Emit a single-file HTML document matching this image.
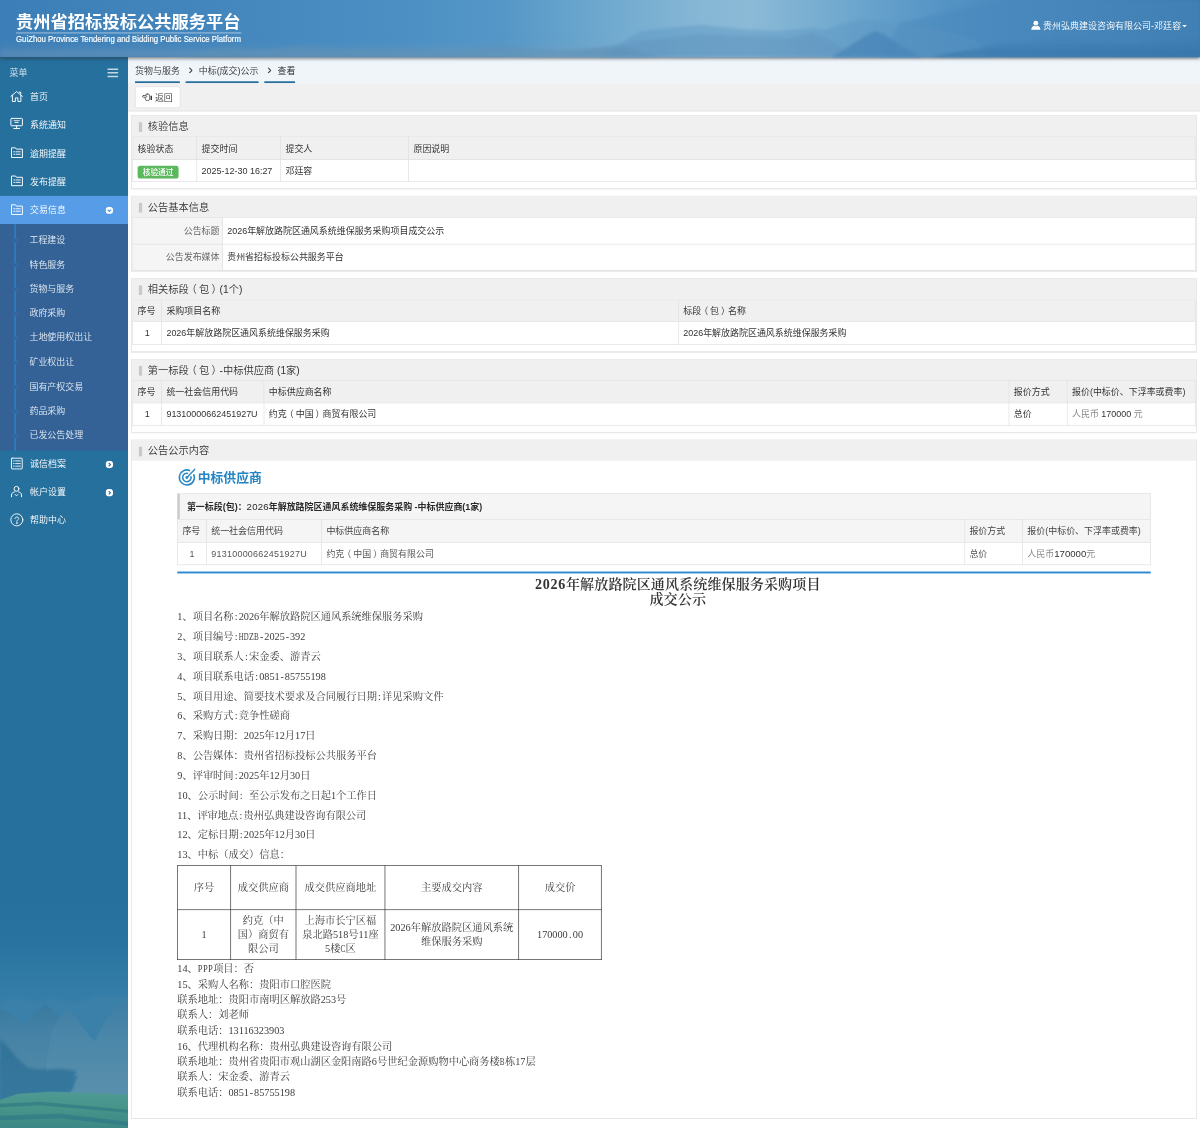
<!DOCTYPE html>
<html lang="zh-CN">
<head>
<meta charset="utf-8">
<title>贵州省招标投标公共服务平台</title>
<style>
*{box-sizing:border-box;margin:0;padding:0}
html,body{width:1200px;height:1128px;overflow:hidden;background:#fff}
body{font-family:"Liberation Sans","Noto Sans CJK SC",sans-serif;font-size:14px;color:#333;font-weight:350}
#stage{position:absolute;left:0;top:0;width:1875px;height:1763px;transform:scale(.64);transform-origin:0 0;overflow:hidden;background:#fff}
/* header */
.header{position:absolute;left:0;top:0;width:1875px;height:89px;z-index:5;overflow:visible;background:#4688bf;
 box-shadow:0 2px 6px rgba(0,0,0,.6)}
.logo{position:absolute;left:25px;top:17px;color:#fff}
.logo .cn{font-size:27px;font-weight:bold;line-height:34px;white-space:nowrap}
.logo .line{height:1px;background:rgba(255,255,255,.8);margin-top:0;width:352px}
.logo .en{font-size:12.2px;line-height:14px;margin-top:3.4px;white-space:nowrap;transform:scaleY(1.12);transform-origin:0 100%;-webkit-text-stroke:.25px #fff}
.user{position:absolute;left:1629.6px;top:30px;color:#fff;font-size:14px;line-height:20px;white-space:nowrap;letter-spacing:.08px}
/* sidebar */
.sidebar{position:absolute;left:0;top:89px;width:200px;height:1674px;background:#26709d;color:#fff;overflow:hidden}
.menuhd{height:40.3px;line-height:48px;padding-left:15px;font-size:14px;position:relative;color:#dbe7f0}
.item{height:44.2px;line-height:44.2px;padding-left:47px;font-size:14px;position:relative;white-space:nowrap}
.item.active{background:#569ce6}
.sub{background:#346296;padding:5.4px 0 4.2px 0;position:relative}
.sub ~ .item{height:43.9px;line-height:43.9px}
.sub:before{content:"";position:absolute;left:22px;top:0;bottom:0;width:3px;background:#2f7abd}
.sub .si{height:38.2px;line-height:38.2px;padding-left:46px;font-size:14px;color:#e3ebf4;position:relative}
/* main */
.main{position:absolute;left:200px;top:89px;width:1675px;height:1674px;background:#fff}
.crumb{height:40.6px;background:#f0f5fa;position:relative;font-size:14px;line-height:20px}
.toolbar{height:44.4px;background:#f0f0f0;border-bottom:1px solid #ddd;position:relative}
.btn{position:absolute;left:11px;top:5.4px;width:71px;height:34px;border:1px solid #ddd;border-radius:4px;background:#fff;font-size:14px;line-height:34px;padding-left:30px}
.panel{margin:0 5px 11px 5px;border:1px solid #ddd;background:#fff;padding:0 1px 10px 1px;box-shadow:0 1px 1px rgba(0,0,0,.08)}
.panel.np{padding-bottom:0}
.panel .pt{height:32px;line-height:34.5px;background:#f0f0f0;font-size:16px;padding-left:25px;position:relative;color:#333;margin:0 -1px}
.panel .pt:before{content:"";position:absolute;left:11px;top:10px;width:5px;height:15px;background:#c8c8c8}
table.g{border-collapse:collapse;width:100%;font-size:14px;table-layout:fixed}
table.g th,table.g td{border:1px solid #ddd;height:35px;padding:0 7px;text-align:left;font-weight:normal;white-space:nowrap;line-height:20px}
table.g th{background:#f0f0f0}
table.g td.c{text-align:center}
table.kv td{height:41px}
table.kv td.k{background:#f5f5f5;text-align:right;color:#666;padding-right:4px}
.badge{display:inline-block;background:#5cb85c;color:#fff;font-size:12px;line-height:20px;height:20px;padding:0 8px;border-radius:4px;vertical-align:middle;font-weight:500;position:relative;top:1.2px}

/* content */
.content{margin-left:70px;width:1564px;position:relative}
.content .hd{margin-top:12px;height:27px;line-height:29.8px;font-size:20px;font-weight:bold;color:#2484c4;padding-left:32px;position:relative;white-space:nowrap}
.content .ibox{margin-top:11.7px;width:1521px;height:40.6px;border:1px solid #ddd;border-left:4px solid #ccc;border-bottom:0;background:#f5f5f5;font-size:14px;font-weight:bold;line-height:40px;padding-left:11px;color:#2a2a2a;white-space:nowrap}
table.it{border-collapse:collapse;width:1521px;font-size:14px;table-layout:fixed;color:#555}
table.it th,table.it td{border:1px solid #ddd;height:34.7px;padding:0 7px;text-align:left;font-weight:normal;white-space:nowrap;line-height:20px}
table.it th{background:#f5f5f5;height:36.2px;color:#444}
table.it td.c{text-align:center}
.bline{margin-top:9.9px;height:3.3px;background:#2e8bcf;width:1521px}
.doc{font-family:"Liberation Serif","Noto Serif CJK SC",serif;font-size:16px;color:#3c3c3c;font-weight:400}
.doc .ttl{margin-top:5.2px;text-align:center;font-size:22px;font-weight:600;line-height:23.4px;color:#333;letter-spacing:.1px}
.doc p{line-height:31px;white-space:nowrap}
.doc p.s{line-height:24.1px}
.doc .h{display:inline-block;width:8px;text-align:center}
.doc .h i{font-style:normal;display:inline-block;width:8px;text-align:center}
table.dt{border-collapse:collapse;table-layout:fixed;width:662.4px;margin-top:1.2px;margin-bottom:2.5px}
table.dt td{border:1.2px solid #2a2a2a;text-align:center;line-height:22px;padding:0 4px;font-size:16px}

/* icons etc */
.ico{position:absolute;display:block;overflow:visible}
.item .chev{position:absolute;left:165.4px;top:16.6px;width:11.8px;height:11.8px}
.si:before{content:"";position:absolute;left:20.7px;top:16.3px;width:5.6px;height:5.6px;border-radius:50%;border:1.3px solid #2f7abd;background:#346296}
.crumb .li{position:absolute;top:0;height:40.6px;border-bottom:3.3px solid #256e9c;line-height:42.5px;white-space:nowrap;color:#333}
.crumb .li svg{position:absolute;left:4.9px;top:15.5px}
.w{display:inline-block;width:8px;transform-origin:0 50%;white-space:nowrap}
.pl{position:relative;left:-.22em}.pr{position:relative;left:.22em}
.r1a th{height:36.2px!important}.r1b td{height:34.2px!important}
.r2a td{height:41.8px!important}.r2b td{height:40.4px!important}
.r3a th{height:34.4px!important}.r3b td{height:35.9px!important}
.gr{color:#888}
</style>
</head>
<body>
<div id="stage">
<div class="header">
<svg class="ico" style="left:0;top:0" width="1875" height="89" viewBox="0 0 1200 57" preserveAspectRatio="none">
<defs>
<linearGradient id="hg" x1="0" x2="1" y1="0" y2="0">
<stop offset="0" stop-color="#3c7eb7"/><stop offset=".17" stop-color="#4386bd"/><stop offset=".33" stop-color="#4b8fc3"/><stop offset=".42" stop-color="#5597c7"/><stop offset=".5" stop-color="#6ea8cf"/><stop offset=".583" stop-color="#86b7d5"/><stop offset=".625" stop-color="#8bbad6"/><stop offset=".667" stop-color="#7db1d2"/><stop offset=".708" stop-color="#6ea7ce"/><stop offset=".75" stop-color="#5f9cc9"/><stop offset=".79" stop-color="#5393c4"/><stop offset=".833" stop-color="#4a8bbf"/><stop offset="1" stop-color="#3777ab"/>
</linearGradient>
<linearGradient id="hv" x1="0" x2="0" y1="0" y2="1"><stop offset="0" stop-color="#7d9db5" stop-opacity="0"/><stop offset=".5" stop-color="#7d9db5" stop-opacity=".05"/><stop offset="1" stop-color="#7d9db5" stop-opacity=".5"/></linearGradient>
<linearGradient id="hv2" x1="0" x2="0" y1="0" y2="1"><stop offset="0" stop-color="#2d6a9f" stop-opacity="0"/><stop offset="1" stop-color="#2d6a9f" stop-opacity=".5"/></linearGradient>
<filter id="b2" x="-5%" y="-30%" width="110%" height="160%"><feGaussianBlur stdDeviation="2.2"/></filter>
<filter id="b1" x="-5%" y="-30%" width="110%" height="160%"><feGaussianBlur stdDeviation="1.4"/></filter>
</defs>
<rect width="1200" height="57" fill="url(#hg)"/>
<path d="M0 57 V40 L60 44 L120 38 L200 42 L260 36 L330 43 L400 38 L470 41 L540 36 L600 34 L640 36 V57 Z" fill="url(#hv)" filter="url(#b2)"/>
<path d="M880 57 L900 23 L930 16 L960 8 L1000 3 L1040 0 H1200 V57 Z" fill="#4888bc" opacity=".5" filter="url(#b1)"/>
<path d="M600 57 L640 31 L700 25 L740 29 L780 31 L812 28 L825 30 L845 23 L865 19 L885 21 L905 24 L940 30 L975 40 L990 57 Z" fill="#5a94c2" opacity=".42" filter="url(#b1)"/>
<path d="M560 57 L600 48 L640 41 L700 34 L740 36 L790 38 L812 33 L830 40 L845 50 L850 57 Z" fill="#5f93bd" opacity=".4" filter="url(#b1)"/>
<path d="M832 57 L850 46 L865 36 L875 31 L885 35 L900 45 L922 57 Z" fill="#4b88b9" opacity=".85" filter="url(#b1)"/>
<path d="M930 57 L1000 44 L1060 38 L1130 45 L1200 38 V57 Z" fill="url(#hv2)" filter="url(#b1)"/>
<path d="M180 57 L220 47 L260 50 L300 45 L350 50 L400 47 L450 52 L500 46 L560 50 L620 46 L660 57 Z" fill="#5f8fb3" opacity=".4" filter="url(#b1)"/>
</svg>
  <div class="logo"><div class="cn">贵州省招标投标公共服务平台</div><div class="line"></div><div class="en">GuiZhou Province Tendering and Bidding Public Service Platform</div></div>
  <svg class="ico" style="left:1611px;top:32px" width="15" height="15" viewBox="0 0 15 15"><circle cx="7.5" cy="4.2" r="3.7" fill="#fff"/><path d="M0.3 14.6 C0.3 10.2 3.4 8.6 5.6 8.4 L7.5 9.6 L9.4 8.4 C11.6 8.6 14.7 10.2 14.7 14.6 Z" fill="#fff"/></svg>
  <div class="user">贵州弘典建设咨询有限公司-邓廷容</div>
  <svg class="ico" style="left:1847px;top:39px" width="7.4" height="3.8" viewBox="0 0 8 4"><path d="M0 0H8L4 4Z" fill="#fff"/></svg>
</div>
<div class="sidebar">
<svg class="ico" style="left:0;bottom:0" width="200" height="362.5" viewBox="0 896 128 232" preserveAspectRatio="none">
<defs>
<linearGradient id="sg" x1="0" x2="0" y1="0" y2="1"><stop offset="0" stop-color="#26709d"/><stop offset=".2" stop-color="#2873a0"/><stop offset=".42" stop-color="#347da8"/><stop offset=".6" stop-color="#3a80a8"/><stop offset="1" stop-color="#3a80a8"/></linearGradient>
<linearGradient id="mA" gradientUnits="userSpaceOnUse" x1="0" x2="0" y1="1002" y2="1075"><stop offset="0" stop-color="#38789f"/><stop offset=".35" stop-color="#4381a5"/><stop offset="1" stop-color="#5089a8"/></linearGradient>
<linearGradient id="mB" gradientUnits="userSpaceOnUse" x1="0" x2="0" y1="1002" y2="1090"><stop offset="0" stop-color="#3f7ea5"/><stop offset=".4" stop-color="#4b87a9"/><stop offset="1" stop-color="#588fac"/></linearGradient>
<linearGradient id="mD" gradientUnits="userSpaceOnUse" x1="0" x2="0" y1="1040" y2="1095"><stop offset="0" stop-color="#32729a"/><stop offset="1" stop-color="#36789c"/></linearGradient>
<linearGradient id="gf" x1="0" x2="0" y1="0" y2="1"><stop offset="0" stop-color="#4f9994"/><stop offset=".4" stop-color="#47958a"/><stop offset="1" stop-color="#3c8886"/></linearGradient>
<filter id="sb" x="-20%" y="-20%" width="140%" height="140%"><feGaussianBlur stdDeviation="1.6"/></filter>
<filter id="sb2" x="-20%" y="-20%" width="140%" height="140%"><feGaussianBlur stdDeviation="0.7"/></filter>
</defs>
<rect x="0" y="896" width="128" height="232" fill="url(#sg)"/>
<path d="M0 1001 L18 997 L34 1001 L56 998 L74 1003 L95 996 L128 995 V1128 H0 Z" fill="#3b80a9" filter="url(#sb)"/>
<path d="M0 1009 L8 1011 L16 1018 L24 1026 L20 1060 L0 1060 Z" fill="url(#mA)" filter="url(#sb2)"/>
<path d="M14 1040 L25 1022 L36 1010 L45 1004 L52 1009 L58 1018 L64 1026 L62 1050 L40 1072 L14 1068 Z" fill="url(#mA)" filter="url(#sb2)"/>
<path d="M52 1030 L60 1016 L67 1007 L73 1013 L82 1026 L92 1038 L100 1042 L84 1075 L44 1078 Z" fill="url(#mB)" filter="url(#sb2)"/>
<path d="M128 1001 L118 1005 L108 1016 L100 1030 L90 1052 L80 1072 L70 1092 L128 1097 Z" fill="url(#mB)" filter="url(#sb2)"/>
<path d="M0 1038 L8 1046 L16 1056 L28 1067 L44 1069 L60 1068 L76 1070 L72 1090 L40 1093 L14 1098 L0 1100 Z" fill="url(#mD)" filter="url(#sb)"/>
<path d="M0 1099 L18 1093 L50 1091 L90 1092 L128 1094 V1128 H0 Z" fill="url(#gf)" filter="url(#sb2)"/>
<path d="M0 1103 L40 1101 L128 1109 V1112 L40 1104.5 L0 1106.5 Z M0 1115 L60 1113 L128 1121 V1125 L60 1117.5 L0 1119.5 Z" fill="#2f7584" opacity=".6" filter="url(#sb2)"/>
</svg>
  <div class="menuhd">菜单<svg class="ico" style="left:167.6px;top:17.6px" width="16.6" height="13.6" viewBox="0 0 16.6 13.6"><path d="M0 1.2H16.6M0 6.8H16.6M0 12.4H16.6" stroke="#c3d6e4" stroke-width="2.3"/></svg></div>
  <div class="item"><svg class="ico" style="left:16px;top:12.5px" width="20" height="17.5" viewBox="0 0 20 17.5" fill="none" stroke="#fff" stroke-width="1.5" stroke-linejoin="round" stroke-linecap="round"><path d="M1 8.6 L10 1 L19 8.6"/><path d="M3.4 7.2 V16.6 H8 V11 H12 V16.6 H16.6 V7.2"/><path d="M14.2 2 H16.4 V5"/></svg>首页</div>
  <div class="item"><svg class="ico" style="left:16px;top:11px" width="20" height="18" viewBox="0 0 20 18" fill="none" stroke="#fff" stroke-width="1.5" stroke-linejoin="round" stroke-linecap="round"><rect x="1" y="1" width="18" height="11.5" rx="1.2"/><path d="M10 12.5 V16.6 M5.5 16.8 H14.5"/><path d="M6 4.6 H14 M7.6 7.4 H12.4" stroke-width="1.3"/></svg>系统通知</div>
  <div class="item"><svg class="ico" style="left:17px;top:12.6px" width="19" height="16.5" viewBox="0 0 19 16.5" fill="none" stroke="#fff" stroke-width="1.5" stroke-linejoin="round" stroke-linecap="round"><path d="M1 15.5 V1 H7.2 L8.6 3 H18 V15.5 Z"/><path d="M4.6 7.2 H6 M8 7.2 H14.6 M4.6 11 H6 M8 11 H14.6" stroke-width="1.4"/></svg>逾期提醒</div>
  <div class="item"><svg class="ico" style="left:17px;top:12.6px" width="19" height="16.5" viewBox="0 0 19 16.5" fill="none" stroke="#fff" stroke-width="1.5" stroke-linejoin="round" stroke-linecap="round"><path d="M1 15.5 V1 H7.2 L8.6 3 H18 V15.5 Z"/><path d="M4.6 7.2 H6 M8 7.2 H14.6 M4.6 11 H6 M8 11 H14.6" stroke-width="1.4"/></svg>发布提醒</div>
  <div class="item active"><svg class="ico" style="left:17px;top:12.6px" width="19" height="16.5" viewBox="0 0 19 16.5" fill="none" stroke="#fff" stroke-width="1.5" stroke-linejoin="round" stroke-linecap="round"><path d="M1 15.5 V1 H7.2 L8.6 3 H18 V15.5 Z"/><path d="M4.6 7.2 H6 M8 7.2 H14.6 M4.6 11 H6 M8 11 H14.6" stroke-width="1.4"/></svg>交易信息<svg class="chev" viewBox="0 0 12 12"><circle cx="6" cy="6" r="6" fill="#fff"/><path d="M3.3 4.8 L6 7.6 L8.7 4.8" fill="none" stroke="#569ce6" stroke-width="1.8"/></svg></div>
  <div class="sub">
    <div class="si">工程建设</div>
    <div class="si">特色服务</div>
    <div class="si">货物与服务</div>
    <div class="si">政府采购</div>
    <div class="si">土地使用权出让</div>
    <div class="si">矿业权出让</div>
    <div class="si">国有产权交易</div>
    <div class="si">药品采购</div>
    <div class="si">已发公告处理</div>
  </div>
  <div class="item"><svg class="ico" style="left:17px;top:11.4px" width="18.6" height="18.6" viewBox="0 0 18.6 18.6" fill="none" stroke="#fff" stroke-width="1.4" stroke-linejoin="round" stroke-linecap="round"><rect x="0.9" y="0.9" width="16.8" height="16.8" rx="0.8"/><path d="M4 5.2 H5.2 M7.4 5.2 H14.8 M4 9.3 H5.2 M7.4 9.3 H14.8 M4 13.4 H5.2 M7.4 13.4 H14.8" stroke-width="1.3"/></svg>诚信档案<svg class="chev" viewBox="0 0 12 12"><circle cx="6" cy="6" r="6" fill="#fff"/><path d="M4.9 3.3 L7.7 6 L4.9 8.7" fill="none" stroke="#26709d" stroke-width="1.8"/></svg></div>
  <div class="item"><svg class="ico" style="left:17.4px;top:11.4px" width="17.6" height="18.4" viewBox="0 0 17.6 18.4" fill="none" stroke="#fff" stroke-width="1.5" stroke-linejoin="round" stroke-linecap="round"><circle cx="8.8" cy="4.8" r="3.8"/><path d="M1 17.2 V14.4 C1 11.4 3.4 10 5.6 9.6 M16.6 17.2 V14.4 C16.6 11.4 14.2 10 12 9.6"/><path d="M6.8 13.6 L8.8 16 L10.8 13.6" stroke-width="1.3"/></svg>帐户设置<svg class="chev" viewBox="0 0 12 12"><circle cx="6" cy="6" r="6" fill="#fff"/><path d="M4.9 3.3 L7.7 6 L4.9 8.7" fill="none" stroke="#26709d" stroke-width="1.8"/></svg></div>
  <div class="item"><svg class="ico" style="left:15.6px;top:10.4px" width="20.6" height="20.6" viewBox="0 0 20.6 20.6" fill="none" stroke="#fff" stroke-width="1.4" stroke-linejoin="round" stroke-linecap="round"><circle cx="10.3" cy="10.3" r="9.4"/><path d="M7.4 8.2 C7.4 5 13.2 5 13.2 8.2 C13.2 10.2 10.3 10.2 10.3 12.4" stroke-width="1.4"/><circle cx="10.3" cy="15.2" r="0.5" fill="#fff"/></svg>帮助中心</div>
</div>
<div class="main">
  <div class="crumb"><div class="li" style="left:11px;width:70.2px">货物与服务</div><div class="li" style="left:90px;width:114px;padding-left:20.5px"><svg width="6" height="10" viewBox="0 0 6 10"><path d="M0.8 0.8 L5 5 L0.8 9.2" fill="none" stroke="#444" stroke-width="1.7"/></svg>中标(成交)公示</div><div class="li" style="left:213.2px;width:47.8px;padding-left:20.4px;color:#222"><svg width="6" height="10" viewBox="0 0 6 10"><path d="M0.8 0.8 L5 5 L0.8 9.2" fill="none" stroke="#444" stroke-width="1.7"/></svg>查看</div></div>
  <div class="toolbar"><div class="btn"><svg class="ico" style="left:10.4px;top:10.2px" width="15.6" height="12" viewBox="0 0 15.6 12" fill="none" stroke="#4a4a4a" stroke-width="1.25" stroke-linejoin="round" stroke-linecap="round"><rect x="5" y="0.7" width="6.8" height="10.6" rx="3.2"/><rect x="0.7" y="3.3" width="6.6" height="2.7" rx="1.35" fill="#fff"/><path d="M14.3 3.8 V10.4" stroke-width="2.1" stroke="#23233a" stroke-linecap="butt"/></svg>返回</div></div>
  <div style="height:6px"></div>
  <div class="panel">
    <div class="pt">核验信息</div>
    <table class="g"><colgroup><col style="width:100px"><col style="width:131px"><col style="width:200px"><col></colgroup>
    <tr class="r1a"><th>核验状态</th><th>提交时间</th><th>提交人</th><th>原因说明</th></tr>
    <tr class="r1b"><td><span class="badge">核验通过</span></td><td>2025-12-30 16:27</td><td>邓廷容</td><td></td></tr></table>
  </div>
  <div class="panel np">
    <div class="pt">公告基本信息</div>
    <table class="g kv"><colgroup><col style="width:140px"><col></colgroup>
    <tr class="r2a"><td class="k">公告标题</td><td>2026年解放路院区通风系统维保服务采购项目成交公示</td></tr>
    <tr class="r2b"><td class="k">公告发布媒体</td><td>贵州省招标投标公共服务平台</td></tr></table>
  </div>
  <div class="panel">
    <div class="pt">相关标段<span class="pl">（</span>包<span class="pr">）</span>(1个)</div>
    <table class="g"><colgroup><col style="width:45px"><col><col></colgroup>
    <tr class="r3a"><th>序号</th><th>采购项目名称</th><th>标段<span class="pl">（</span>包<span class="pr">）</span>名称</th></tr>
    <tr class="r3b"><td class="c">1</td><td>2026年解放路院区通风系统维保服务采购</td><td>2026年解放路院区通风系统维保服务采购</td></tr></table>
  </div>
  <div class="panel">
    <div class="pt">第一标段<span class="pl">（</span>包<span class="pr">）</span>-中标供应商 (1家)</div>
    <table class="g"><colgroup><col style="width:45px"><col style="width:160px"><col><col style="width:91px"><col style="width:200px"></colgroup>
    <tr><th>序号</th><th>统一社会信用代码</th><th>中标供应商名称</th><th>报价方式</th><th>报价(中标价、下浮率或费率)</th></tr>
    <tr><td class="c">1</td><td>91310000662451927U</td><td>约克<span class="pl">（</span>中国<span class="pr">）</span>商贸有限公司</td><td>总价</td><td><span class="gr">人民币</span> 170000 <span class="gr">元</span></td></tr></table>
  </div>
  <div class="panel" id="p5" style="height:1061px">
    <div class="pt">公告公示内容</div>
    <div class="content">
      <div class="hd"><svg class="ico" style="left:-0.4px;top:-0.7px" width="30" height="30" viewBox="0 0 30 30" fill="none" stroke="#2b88c4" stroke-width="2.5" stroke-linecap="butt"><path d="M25.6 10.06 A11.7 11.7 0 1 1 19.94 4.4"/><path d="M21.31 13.07 A6.6 6.6 0 1 1 16.93 8.69" stroke-width="2.4"/><circle cx="15" cy="15" r="2.3" fill="#2b88c4" stroke="none"/><path d="M15 15 L27.4 2.3" stroke-width="2.1" stroke-linecap="round"/></svg>中标供应商</div>
      <div class="ibox">第一标段(包)：<span style="font-weight:400;font-size:15px;letter-spacing:.3px">2026</span>年解放路院区通风系统维保服务采购 -中标供应商(1家)</div>
      <table class="it"><colgroup><col style="width:45px"><col style="width:180px"><col><col style="width:90.5px"><col style="width:199.8px"></colgroup>
      <tr><th>序号</th><th>统一社会信用代码</th><th>中标供应商名称</th><th>报价方式</th><th>报价(中标价、下浮率或费率)</th></tr>
      <tr><td class="c">1</td><td style="letter-spacing:.4px">91310000662451927U</td><td>约克<span class="pl">（</span>中国<span class="pr">）</span>商贸有限公司</td><td>总价</td><td><span class="gr">人民币</span><span style="color:#333;font-size:15px">170000</span><span class="gr">元</span></td></tr></table>
      <div class="bline"></div>
      <div class="doc">
        <div class="ttl"><span style="letter-spacing:1.1px">2026</span>年解放路院区通风系统维保服务采购项目<br>成交公示</div>
        <div style="height:0;margin-top:-.2px"></div>
        <p>1、项目名称<span class="h">:</span>2026年解放路院区通风系统维保服务采购</p>
        <p>2、项目编号<span class="h">:</span><span class="w" style="transform:scaleX(0.66)">H</span><span class="w" style="transform:scaleX(0.66)">D</span><span class="w" style="transform:scaleX(0.78)">Z</span><span class="w" style="transform:scaleX(0.7)">B</span><span class="h">-</span>2025<span class="h">-</span>392</p>
        <p>3、项目联系人<span class="h">:</span>宋金委、游青云</p>
        <p>4、项目联系电话<span class="h">:</span>0851<span class="h">-</span>85755198</p>
        <p>5、项目用途、简要技术要求及合同履行日期<span class="h">:</span>详见采购文件</p>
        <p>6、采购方式<span class="h">:</span>竞争性磋商</p>
        <p>7、采购日期：2025年12月17日</p>
        <p>8、公告媒体：贵州省招标投标公共服务平台</p>
        <p>9、评审时间<span class="h">:</span>2025年12月30日</p>
        <p>10、公示时间<span class="h">:</span><span class="h">&nbsp;</span>至公示发布之日起1个工作日</p>
        <p>11、评审地点<span class="h">:</span>贵州弘典建设咨询有限公司</p>
        <p>12、定标日期<span class="h">:</span>2025年12月30日</p>
        <p>13、中标（成交）信息：</p>
        <table class="dt"><colgroup><col style="width:82.8px"><col style="width:102.3px"><col style="width:138.7px"><col style="width:209px"><col style="width:129.6px"></colgroup>
        <tr style="height:69.1px"><td>序号</td><td>成交供应商</td><td>成交供应商地址</td><td>主要成交内容</td><td>成交价</td></tr>
        <tr style="height:77.3px"><td>1</td><td>约克（中<br>国）商贸有<br>限公司</td><td>上海市长宁区福<br>泉北路518号11座<br>5楼<span class="w" style="transform:scaleX(0.7)">C</span>区</td><td>2026年解放路院区通风系统<br>维保服务采购</td><td>170000<span class="h">.</span>00</td></tr></table>
        <p class="s">14、<span class="w" style="transform:scaleX(0.84)">P</span><span class="w" style="transform:scaleX(0.84)">P</span><span class="w" style="transform:scaleX(0.84)">P</span>项目：否</p>
        <p class="s">15、采购人名称：贵阳市口腔医院</p>
        <p class="s">联系地址：贵阳市南明区解放路253号</p>
        <p class="s">联系人：刘老师</p>
        <p class="s">联系电话：13116323903</p>
        <p class="s">16、代理机构名称：贵州弘典建设咨询有限公司</p>
        <p class="s">联系地址：贵州省贵阳市观山湖区金阳南路6号世纪金源购物中心商务楼<span class="w" style="transform:scaleX(0.7)">B</span>栋17层</p>
        <p class="s">联系人：宋金委、游青云</p>
        <p class="s">联系电话：0851<span class="h">-</span>85755198</p>
      </div>
    </div>
  </div>
</div>
</div>
</body>
</html>
